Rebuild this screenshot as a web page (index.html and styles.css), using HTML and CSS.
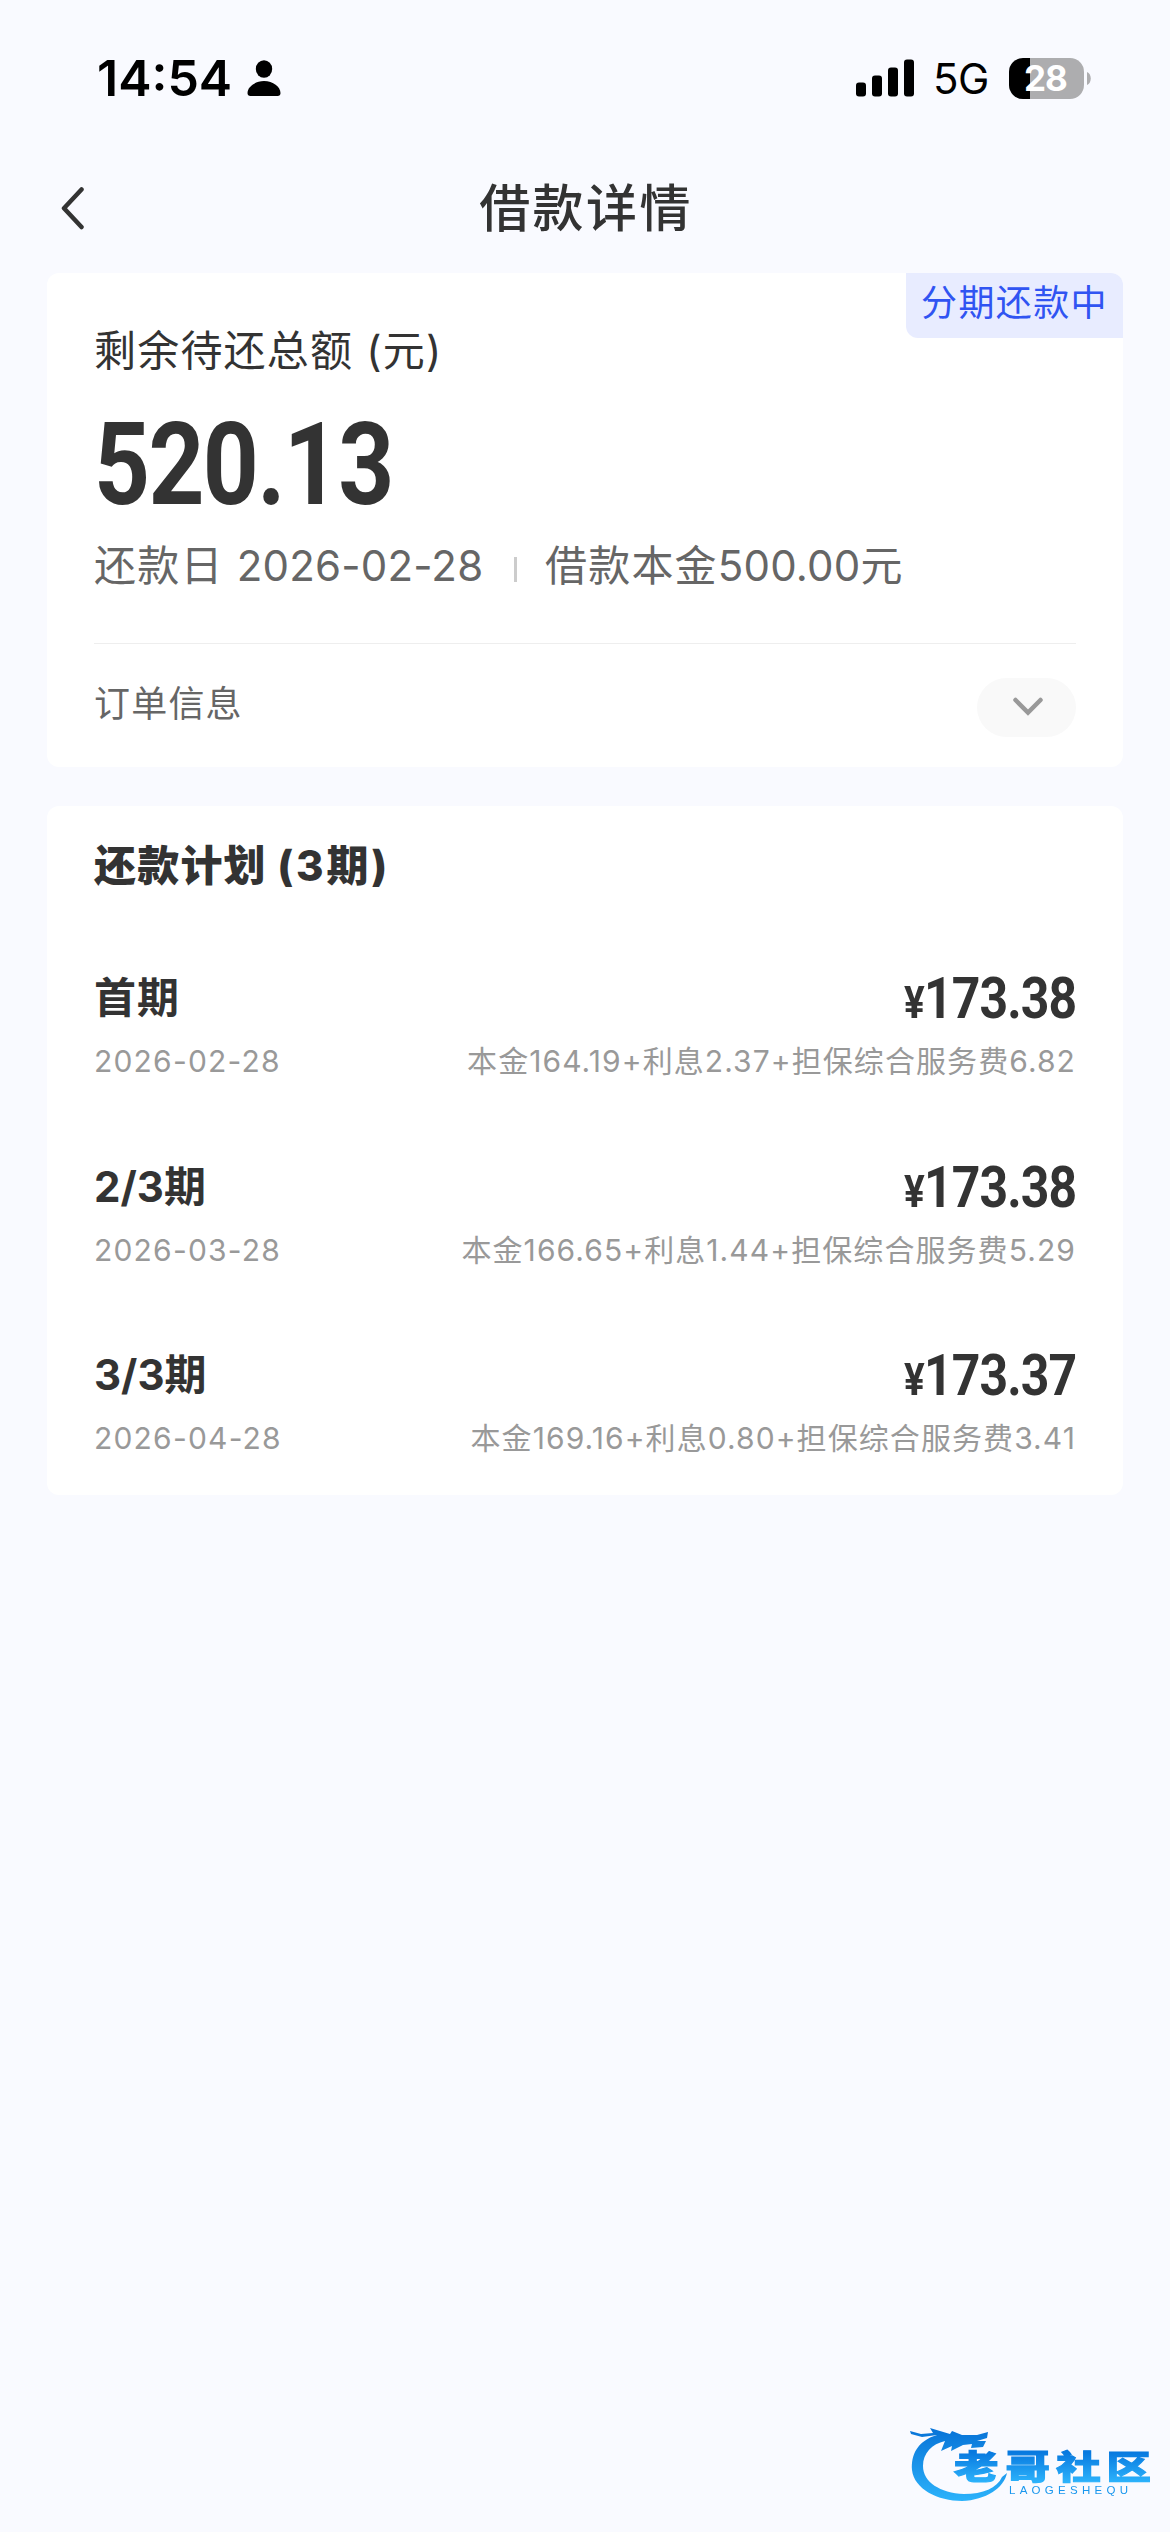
FILE: index.html
```html
<!DOCTYPE html>
<html lang="zh-CN">
<head>
<meta charset="utf-8">
<title>借款详情</title>
<link rel="stylesheet" href="styles.css">
</head>
<body>
<div class="screen">
  <div class="status">
    <span class="clock">14:54</span>
    <svg class="person" width="34" height="36" viewBox="0 0 34 36"><ellipse cx="17" cy="9" rx="8.2" ry="8.8"/><path d="M17 21C26 21 33.5 27 33.5 33Q33.5 36 30.500 36H3.500Q.5 36 .5 33C.5 27 8 21 17 21Z"/></svg>
    <svg class="signal" width="58" height="38" viewBox="0 0 58 38"><rect y="23.500" width="10" height="14" rx="3"/><rect x="16" y="16.500" width="10" height="21" rx="3"/><rect x="32" y="8.500" width="10" height="29" rx="3"/><rect x="48" y=".5" width="10" height="37" rx="3"/></svg>
    <span class="network">5G</span>
    <div class="battery"><span>28</span></div>
    <svg class="nub" width="4" height="13" viewBox="0 0 4 13"><path d="M0 0C5 2 5 11 0 13Z"/></svg>
  </div>
  <header class="nav">
    <svg class="back" width="26" height="44" viewBox="0 0 26 44"><path d="M22.500 3.500L5 22.200L22.500 41"/></svg>
    <h1>借款详情</h1>
  </header>
  <main>
    <section class="card summary">
      <div class="badge">分期还款中</div>
      <div class="label">剩余待还总额 (元)</div>
      <div class="total"><span class="num">520.13</span></div>
      <div class="meta"><span class="due">还款日 <span class="digits">2026-02-28</span></span><span class="bar"></span><span class="principal">借款本金<span class="digits">500.00</span>元</span></div>
      <div class="order">
        <span>订单信息</span>
        <div class="toggle"><svg width="32" height="20" viewBox="0 0 32 20"><path d="M3.500 3L16 15.500L28.500 3"/></svg></div>
      </div>
    </section>
    <section class="card plan">
      <h2>还款计划 <span>(3期)</span></h2>
      <div class="row">
        <div class="top"><b>首期</b><span class="num"><small>¥</small>173.38</span></div>
        <div class="sub"><span class="date">2026-02-28</span><span>本金164.19+利息2.37+担保综合服务费6.82</span></div>
      </div>
      <div class="row">
        <div class="top"><b><span class="digits">2/3</span>期</b><span class="num"><small>¥</small>173.38</span></div>
        <div class="sub"><span class="date">2026-03-28</span><span>本金166.65+利息1.44+担保综合服务费5.29</span></div>
      </div>
      <div class="row">
        <div class="top"><b><span class="digits">3/3</span>期</b><span class="num"><small>¥</small>173.37</span></div>
        <div class="sub"><span class="date">2026-04-28</span><span>本金169.16+利息0.80+担保综合服务费3.41</span></div>
      </div>
    </section>
  </main>
  <svg class="logo" width="280" height="110" viewBox="0 0 280 110">
    <defs><linearGradient id="g" gradientUnits="userSpaceOnUse" x1="0" y1="20" x2="0" y2="90"><stop offset="0" stop-color="#0874d8"/><stop offset="1" stop-color="#2cb2fb"/></linearGradient>
    <linearGradient id="t" gradientUnits="userSpaceOnUse" x1="0" y1="-28" x2="0" y2="3"><stop offset="0" stop-color="#0879df"/><stop offset="1" stop-color="#2cb2fb"/></linearGradient></defs>
    <path fill="url(#g)" d="M47 25C27 31 21 45 22 60C24 79 48 91 72 91C96 90 114 78 117 63L112 67C107 78 93 84 74 84C50 83 33 72 33 56C33 43 42 34 55 31L51 41L62 36L61 41L73 35L82 34L81 38L93 37L96 31L87 31L97 28L98 22L87 25L72 25L62 21L60 24L40 18L43 23L31 24L20 21L21 24L32 27Z"/>
    <g fill="url(#t)" stroke="url(#t)" class="brand" transform="translate(64 69) scale(1.27 .95)"><text y="0" x="0 40.500 80.500 120">老哥社区</text></g>
    <text class="latin" x="119" y="84" textLength="119">LAOGESHEQU</text>
  </svg>
</div>
</body>
</html>
```
FILE: styles.css
```css
* { box-sizing: border-box; margin: 0; padding: 0; }
body { background: #f9faff; color: #333; font-family: Inter, "Noto Sans CJK SC", sans-serif; }
svg { display: block; flex: none; }
.screen { width: 1170px; height: 2532px; display: flex; flex-direction: column; overflow: hidden; }
.status { height: 146px; padding: 48px 79px 38px 97px; display: flex; align-items: center; color: #000; white-space: nowrap; }
.clock { width: 150px; font-size: 50px; font-weight: 600; line-height: 60px; }
.signal { margin-left: 575px; }
.network { margin-left: 19px; width: 76px; font-size: 42px; line-height: 60px; letter-spacing: -.5px; padding-top: 2px; }
.battery { width: 75px; height: 41px; border-radius: 14px; background: linear-gradient(90deg, #000 21px, #adadaf 21px); color: #fff; font-size: 35px; font-weight: 700; line-height: 41px; padding-left: 15px; letter-spacing: -1px; flex: none; }
.nub { fill: #adadaf; margin-left: 3px; }
.nav { height: 127px; padding: 0 59px; display: grid; grid-template-columns: 26px 1fr 26px; align-items: center; }
.back { fill: none; stroke: #333; stroke-width: 4.500; stroke-linecap: round; stroke-linejoin: round; margin-bottom: 4px; }
h1 { font-size: 51px; font-weight: 500; letter-spacing: 2.400px; text-align: center; line-height: 60px; padding-left: 2px; margin-top: -2px; }
main { padding: 0 47px; display: flex; flex-direction: column; gap: 39px; }
.card { background: #fff; border-radius: 12px; padding: 0 47px; position: relative; }
.summary { height: 494px; padding-top: 48px; font-size: 42px; line-height: 60px; letter-spacing: 1.200px; }
.badge { position: absolute; top: 0; right: 0; width: 217px; height: 65px; padding-left: 15px; border-radius: 0 12px; background: #e8ecff; color: #3054f2; font-size: 36px; letter-spacing: 1.400px; }
.num { font-family: Roboto, sans-serif; font-weight: 700; display: inline-block; white-space: nowrap; }
.total { margin-top: 32px; height: 100px; line-height: 100px; font-size: 115px; }
.total .num { letter-spacing: -2px; transform: scaleX(.85); transform-origin: left; }
.meta { margin-top: 23px; color: #666; display: flex; align-items: center; white-space: nowrap; }
.meta .digits { letter-spacing: .2px; }
.due { width: 420px; }
.bar { width: 3px; height: 25px; background: #ccc; margin: 6px 28px 0 0; }
.order { margin-top: 47px; height: 124px; border-top: 1px solid #eee; display: flex; justify-content: space-between; color: #666; font-size: 36px; padding-top: 30px; }
.toggle { width: 99px; height: 59px; border-radius: 30px; background: #f9f9f9; margin-top: 4px; display: flex; justify-content: center; padding: 19px 0 0 2px; }
.toggle path { fill: none; stroke: #999; stroke-width: 4.500; stroke-linecap: round; }
.plan { height: 689px; padding-top: 30px; }
h2 { font-size: 42px; font-weight: 800; line-height: 60px; letter-spacing: 1.200px; }
h2 span { letter-spacing: 2.800px; }
.row { margin-top: 75.600px; }
h2 + .row { margin-top: 72px; }
.top { height: 60px; display: flex; justify-content: space-between; line-height: 60px; font-size: 42px; letter-spacing: 1px; }
.top b { font-weight: 700; }
.top .digits { letter-spacing: 0; }
.top .num { font-size: 58px; letter-spacing: -1px; transform: scaleX(.86); transform-origin: right; }
.top small { font-size: 45px; }
.sub { margin-top: 13px; height: 40px; display: flex; justify-content: space-between; color: #999; font-size: 30px; line-height: 40px; letter-spacing: 1.080px; white-space: nowrap; }
.date { letter-spacing: 1.200px; }
.logo { margin-top: auto; margin-bottom: 12px; align-self: flex-end; filter: blur(.6px); }
.brand { font: 900 35px "Noto Sans CJK SC", sans-serif; stroke-width: 1.200; }
.latin { font: 400 11.500px "Liberation Sans", sans-serif; fill: #1a97ee; }
```
